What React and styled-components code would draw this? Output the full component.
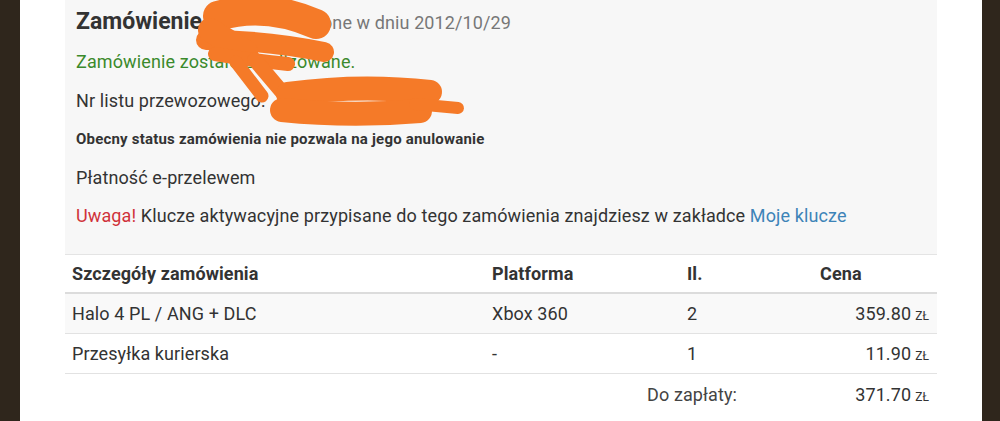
import React from 'react';
import styled, { createGlobalStyle } from 'styled-components';

const GlobalStyle = createGlobalStyle`
  html, body {
    margin: 0;
    padding: 0;
    background: #2f261c;
  }
  body {
    font-family: Roboto, "Noto Sans", "Liberation Sans", sans-serif;
    color: #333;
  }
`;

const Frame = styled.div`
  display: flex;
  height: 421px;
  padding: 0 18px 0 20px;
  overflow: hidden;
`;

const Panel = styled.div`
  flex: 1;
  background: #fff;
  padding: 0 45px;
  position: relative;
`;

const InfoBox = styled.div`
  background: #f7f7f7;
  padding: 2px 11px 0;
  height: 254px;
  box-sizing: border-box;
`;

const Title = styled.h2`
  margin: 0;
  font-size: 23px;
  line-height: 40px;
  font-weight: 700;
  color: #333;
`;

const TitleDate = styled.span`
  font-size: 18px;
  font-weight: 400;
  color: #777;
  letter-spacing: 0.1px;
  margin-left: 120px;
`;

const Line = styled.p`
  margin: 0;
  font-size: ${(p) => (p.small ? '15px' : '18px')};
  font-weight: ${(p) => (p.small ? 700 : 400)};
  letter-spacing: ${(p) => (p.small ? '0.2px' : '0.12px')};
  line-height: 38.5px;
  color: ${(p) => p.color || '#333'};
`;

const Warn = styled.span`
  color: #d0323a;
`;

const KeyLink = styled.a`
  color: #3d84b8;
  text-decoration: none;
`;

const Table = styled.table`
  width: 100%;
  border-collapse: collapse;
  font-size: 18px;
  letter-spacing: 0.1px;
  color: #333;
`;

const Th = styled.th`
  text-align: left;
  font-weight: 700;
  height: 38px;
  padding: 0 7px;
  border-top: 1px solid #e4e4e4;
  border-bottom: 2px solid #dcdcdc;
  width: ${(p) => p.w || 'auto'};
  box-sizing: border-box;
`;

const Row = styled.tr`
  background: ${(p) => (p.striped ? '#f9f9f9' : 'transparent')};
`;

const Td = styled.td`
  height: 39px;
  padding: ${(p) => (p.right ? '0 8px 0 7px' : '0 7px')};
  text-align: ${(p) => (p.right ? 'right' : 'left')};
  border-bottom: ${(p) => (p.plain ? 'none' : '1px solid #e2e2e2')};
`;

const TotalLabel = styled.td`
  height: 40px;
  text-align: right;
  padding-right: 76px;
  color: #444;
`;

const Currency = styled.span`
  font-size: 12px;
  margin-left: 4px;
  text-transform: uppercase;
`;

const Scribble = styled.svg`
  position: absolute;
  left: -20px;
  top: 0;
  width: 1000px;
  height: 130px;
  pointer-events: none;
`;

const rows = [
  { name: 'Halo 4 PL / ANG + DLC', platform: 'Xbox 360', qty: 2, price: '359.80' },
  { name: 'Przesyłka kurierska', platform: '-', qty: 1, price: '11.90' },
];

function Price({ value }) {
  return (
    <>
      {value}
      <Currency>zł</Currency>
    </>
  );
}

export default function App() {
  return (
    <>
      <GlobalStyle />
      <Frame>
        <Panel>
          <InfoBox>
            <Title>
              Zamówienie
              <TitleDate>one w dniu 2012/10/29</TitleDate>
            </Title>
            <Line color="#3b8a2c">Zamówienie zostało zrealizowane.</Line>
            <Line>Nr listu przewozowego:</Line>
            <Line small>Obecny status zamówienia nie pozwala na jego anulowanie</Line>
            <Line>Płatność e-przelewem</Line>
            <Line>
              <Warn>Uwaga!</Warn> Klucze aktywacyjne przypisane do tego zamówienia znajdziesz w zakładce{' '}
              <KeyLink href="#">Moje klucze</KeyLink>
            </Line>
          </InfoBox>

          <Table>
            <thead>
              <tr>
                <Th w="420px">Szczegóły zamówienia</Th>
                <Th w="195px">Platforma</Th>
                <Th w="133px">Il.</Th>
                <Th>Cena</Th>
              </tr>
            </thead>
            <tbody>
              {rows.map((r, i) => (
                <Row key={r.name} striped={i === 0}>
                  <Td>{r.name}</Td>
                  <Td>{r.platform}</Td>
                  <Td>{r.qty}</Td>
                  <Td right>
                    <Price value={r.price} />
                  </Td>
                </Row>
              ))}
              <tr>
                <TotalLabel colSpan={3}>Do zapłaty:</TotalLabel>
                <Td right plain>
                  <Price value="371.70" />
                </Td>
              </tr>
            </tbody>
          </Table>

          {/* the orange marker scribble hiding the order number */}
          <Scribble viewBox="0 0 1000 130">
            <g fill="none" stroke="#f57a28" strokeLinecap="round" strokeLinejoin="round">
              <path d="M218 16 Q265 2 316 24" strokeWidth="30" />
              <path d="M206 40 Q265 40 324 52" strokeWidth="20" />
              <path d="M210 30 L246 52" strokeWidth="24" />
              <path d="M215 54 Q250 60 288 64" strokeWidth="14" />
              <path d="M236 62 L262 96" strokeWidth="13" />
              <path d="M255 60 L282 92" strokeWidth="15" />
              <path d="M288 94 Q360 84 430 92" strokeWidth="24" />
              <path d="M282 110 Q350 117 420 111" strokeWidth="24" />
              <path d="M415 104 L458 108" strokeWidth="12" />
            </g>
          </Scribble>
        </Panel>
      </Frame>
    </>
  );
}
